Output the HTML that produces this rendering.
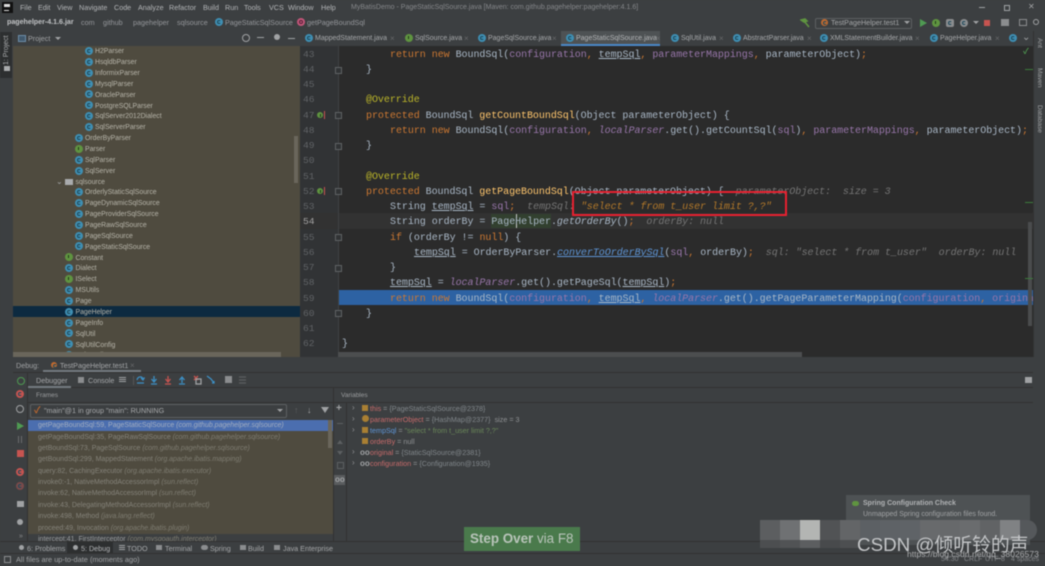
<!DOCTYPE html>
<html><head><meta charset="utf-8"><style>
html,body{margin:0;padding:0;width:1045px;height:566px;overflow:hidden;background:#3c3f41}
#w{position:relative;width:1045px;height:566px;overflow:hidden;font:7px/11px "Liberation Sans","Noto Sans CJK SC",sans-serif;color:#a9abad;filter:blur(.4px)}
#w div,#w svg{position:absolute;white-space:pre}
.m{font-size:7.2px;color:#b3b5b7}
.r{color:#b7b5aa;font-size:6.9px;margin-top:.5px}
.ic{width:8px;height:8px;border-radius:50%;background:#3f8fb3}
.ic:after{content:"";position:absolute;left:2px;top:2px;width:2px;height:2px;border:1px solid #1f4a5c;border-right-color:transparent;border-radius:50%}
.gr{background:#5f9440}.gr:after{left:3px;top:2px;width:1px;height:3px;border:0;background:#22381a;border-radius:0}
.pk{background:#c2567a}.pk:after{border-color:#542036}
.code{font:10px/15px "Liberation Mono",monospace;letter-spacing:-.04px;color:#a9b7c6;transform:translateY(1px)}
.k{color:#cc7832}.f{color:#ffc66d}.an{color:#bbb529}.p{color:#9876aa}.u{text-decoration:underline}.it{font-style:italic}.h{color:#757575;font-style:italic}.l{color:#5e95d6;font-style:italic;text-decoration:underline}
.n{font:9.6px/15px "Liberation Mono",monospace;color:#606366;left:303px}
.t{font-size:7px;color:#a7a9ab;top:33px}
.x{color:#66686a;font-size:8px;top:33px}
.fr{font-size:7px;color:#85837a;left:38px}.fr i{font-style:italic;color:#7f7d72}
.v{font-size:7.2px;left:370px;color:#8f9193}.v .nm{color:#c76a6a}.v .g{color:#80868a}
.vic{width:6px;height:6px;background:#a97f33;left:362px}
.arr{color:#8f9193;left:352px;font-size:8px}
.oo{color:#a0a2a4;left:360px;font-size:8px;font-weight:bold}
.vt{writing-mode:vertical-rl;transform:rotate(180deg);font-size:7px;color:#a9abad;line-height:12px}
.tb{font-size:7.2px;top:543px;color:#a5a7a9}
.st{font-size:7px;color:#85878a;top:548px}
.mos{top:520px;height:20px;width:20px}
.mo2{top:540px;height:8px;width:20px}
.fold{width:5px;height:5px;border:1px solid #5f6264;left:335px;background:#313335}
</style></head><body><div id="w">

<!-- top -->
<div style="left:0;top:0;width:1045px;height:17px;background:#3c3f41"></div>
<div style="left:2px;top:2px;width:11px;height:11px;background:#111"></div>
<div style="left:4px;top:4px;width:6px;height:3px;background:#ddd"></div>
<div style="left:4px;top:10px;width:5px;height:1px;background:#ddd"></div>
<div class="m" style="left:20px;top:2px">File</div><div class="m" style="left:38px;top:2px">Edit</div><div class="m" style="left:57px;top:2px">View</div><div class="m" style="left:79px;top:2px">Navigate</div><div class="m" style="left:114px;top:2px">Code</div><div class="m" style="left:138px;top:2px">Analyze</div><div class="m" style="left:169px;top:2px">Refactor</div><div class="m" style="left:203px;top:2px">Build</div><div class="m" style="left:225px;top:2px">Run</div><div class="m" style="left:244px;top:2px">Tools</div><div class="m" style="left:269px;top:2px">VCS</div><div class="m" style="left:288px;top:2px">Window</div><div class="m" style="left:321px;top:2px">Help</div>
<div style="left:351px;top:2px;font-size:7px;color:#85878a">MyBatisDemo - PageStaticSqlSource.java [Maven: com.github.pagehelper:pagehelper:4.1.6]</div>
<div style="left:979px;top:7px;width:6px;height:1px;background:#a0a2a4"></div>
<div style="left:1004px;top:5px;width:4px;height:4px;border:1px solid #a0a2a4"></div>
<div style="left:1028px;top:1px;font-size:8px;line-height:12px;color:#a0a2a4">✕</div>

<!-- breadcrumb -->
<div style="left:0;top:17px;width:1045px;height:14px;background:#3c3f41;border-bottom:1px solid #323232"></div>
<div style="left:7px;top:17px;font-size:7.1px;color:#c0c2c4;font-weight:bold">pagehelper-4.1.6.jar</div>
<div class="m" style="left:81px;top:17px;color:#94969a">com</div><div class="m" style="left:103px;top:17px;color:#94969a">github</div><div class="m" style="left:133px;top:17px;color:#94969a">pagehelper</div><div class="m" style="left:177px;top:17px;color:#94969a">sqlsource</div>
<div class="ic" style="left:215px;top:18px"></div><div class="m" style="left:225px;top:17px;color:#94969a">PageStaticSqlSource</div>
<div class="ic pk" style="left:297px;top:18px"></div><div class="m" style="left:307px;top:17px;color:#94969a">getPageBoundSql</div>
<svg style="left:800px;top:18px" width="10" height="10" viewBox="0 0 10 10"><path d="M1 2 L5 1 L7 3 L4 4 Z M4 3 L9 9" stroke="#5f9440" stroke-width="1.6" fill="#5f9440"/></svg>
<div style="left:815px;top:18px;width:95px;height:9px;border:1px solid #5c5f61;border-radius:2px"></div>
<div class="ic" style="left:821px;top:19px;background:#c0692f;width:7px;height:7px"></div>
<div class="m" style="left:831px;top:17px;color:#a5a7a9">TestPageHelper.test1</div>
<div style="left:904px;top:21px;border:3px solid transparent;border-top-color:#a0a2a4;width:0;height:0"></div>
<div style="left:920px;top:19px;border:4px solid transparent;border-left:7px solid #4f9a52;border-right:0;width:0;height:0"></div>
<div class="ic gr" style="left:932px;top:19px"></div>
<div class="ic" style="left:946px;top:19px;background:#8b8d8f;border-radius:2px"></div>
<div class="ic" style="left:960px;top:19px;background:#8b8d8f"></div>
<div style="left:973px;top:21px;border:3px solid transparent;border-top-color:#a0a2a4;width:0;height:0"></div>
<div style="left:984px;top:20px;width:6px;height:6px;background:#c75450"></div>
<div style="left:1001px;top:19px;width:8px;height:7px;background:#8b8d8f"></div>
<div style="left:1019px;top:19px;width:8px;height:7px;border:1px solid #8b8d8f;box-sizing:border-box"></div>
<div style="left:1033px;top:19px;width:4px;height:4px;border:1px solid #a0a2a4;border-radius:50%"></div>

<!-- left stripe -->
<div style="left:0;top:31px;width:13px;height:510px;background:#3c3f41;border-right:1px solid #323232"></div>
<div style="left:0;top:32px;width:12px;height:46px;background:#2d2f30"></div>
<div class="vt" style="left:1px;top:35px;height:30px">1: Project</div>
<div style="left:4px;top:66px;width:6px;height:5px;background:#a9abad"></div>
<div class="vt" style="left:1px;top:352px;height:46px">7: Structure</div>
<div class="vt" style="left:1px;top:408px;height:40px">2: Favorites</div>
<div class="vt" style="left:1px;top:460px;height:40px">Persistence</div>
<div class="vt" style="left:1px;top:515px;height:15px">Web</div>

<!-- project header -->
<div style="left:13px;top:31px;width:287px;height:15px;background:#3c3f41;border-bottom:1px solid #323232"></div>
<div style="left:18px;top:35px;width:6px;height:5px;border:1px solid #6c8ca8;background:#41596d"></div>
<div class="m" style="left:28px;top:33px;color:#a0a2a4">Project</div>
<div style="left:55px;top:37px;border:3px solid transparent;border-top-color:#a0a2a4;width:0;height:0"></div>
<div style="left:242px;top:34px;width:6px;height:6px;border:1px solid #a0a2a4;border-radius:50%"></div>
<div style="left:257px;top:37px;width:7px;height:1px;background:#a0a2a4"></div>
<div style="left:274px;top:34px;width:6px;height:6px;background:#a0a2a4;border-radius:50%"></div>
<div style="left:288px;top:38px;width:7px;height:1px;background:#a0a2a4"></div>

<!-- tree -->
<div style="left:13px;top:46px;width:287px;height:311px;background:#4f4b3f"></div>
<div style="left:13px;top:306px;width:287px;height:11px;background:#0d2a40"></div>
<div class="ic" style="left:85px;top:47px"></div><div class="r" style="left:95px;top:45px">H2Parser</div>
<div class="ic" style="left:85px;top:58px"></div><div class="r" style="left:95px;top:56px">HsqldbParser</div>
<div class="ic" style="left:85px;top:69px"></div><div class="r" style="left:95px;top:67px">InformixParser</div>
<div class="ic" style="left:85px;top:80px"></div><div class="r" style="left:95px;top:78px">MysqlParser</div>
<div class="ic" style="left:85px;top:90px"></div><div class="r" style="left:95px;top:89px">OracleParser</div>
<div class="ic" style="left:85px;top:101px"></div><div class="r" style="left:95px;top:100px">PostgreSQLParser</div>
<div class="ic" style="left:85px;top:112px"></div><div class="r" style="left:95px;top:110px">SqlServer2012Dialect</div>
<div class="ic" style="left:85px;top:123px"></div><div class="r" style="left:95px;top:121px">SqlServerParser</div>
<div class="ic" style="left:75px;top:134px"></div><div class="r" style="left:85px;top:132px">OrderByParser</div>
<div class="ic gr" style="left:75px;top:145px"></div><div class="r" style="left:85px;top:143px">Parser</div>
<div class="ic" style="left:75px;top:156px"></div><div class="r" style="left:85px;top:154px">SqlParser</div>
<div class="ic" style="left:75px;top:167px"></div><div class="r" style="left:85px;top:165px">SqlServer</div>
<div style="left:56px;top:176px;color:#a0a2a4;font-size:8px">⌄</div>
<div style="left:65px;top:179px;width:8px;height:6px;background:#a9abad"></div><div class="r" style="left:75.5px;top:176px">sqlsource</div>
<div class="ic" style="left:75px;top:188px"></div><div class="r" style="left:85px;top:186px">OrderlyStaticSqlSource</div>
<div class="ic" style="left:75px;top:199px"></div><div class="r" style="left:85px;top:197px">PageDynamicSqlSource</div>
<div class="ic" style="left:75px;top:210px"></div><div class="r" style="left:85px;top:208px">PageProviderSqlSource</div>
<div class="ic" style="left:75px;top:221px"></div><div class="r" style="left:85px;top:219px">PageRawSqlSource</div>
<div class="ic" style="left:75px;top:232px"></div><div class="r" style="left:85px;top:230px">PageSqlSource</div>
<div class="ic" style="left:75px;top:242px"></div><div class="r" style="left:85px;top:241px">PageStaticSqlSource</div>
<div class="ic gr" style="left:65px;top:253px"></div><div class="r" style="left:75.5px;top:252px">Constant</div>
<div class="ic" style="left:65px;top:264px"></div><div class="r" style="left:75.5px;top:262px">Dialect</div>
<div class="ic gr" style="left:65px;top:275px"></div><div class="r" style="left:75.5px;top:273px">ISelect</div>
<div class="ic" style="left:65px;top:286px"></div><div class="r" style="left:75.5px;top:284px">MSUtils</div>
<div class="ic" style="left:65px;top:297px"></div><div class="r" style="left:75.5px;top:295px">Page</div>
<div class="ic" style="left:65px;top:308px"></div><div class="r" style="left:75.5px;top:306px">PageHelper</div>
<div class="ic" style="left:65px;top:319px"></div><div class="r" style="left:75.5px;top:317px">PageInfo</div>
<div class="ic" style="left:65px;top:329px"></div><div class="r" style="left:75.5px;top:328px">SqlUtil</div>
<div class="ic" style="left:65px;top:340px"></div><div class="r" style="left:75.5px;top:339px">SqlUtilConfig</div>
<div class="ic" style="left:65px;top:351px"></div><div class="r" style="left:75.5px;top:349px">StringUtil</div>
<div style="left:13px;top:352px;width:268px;height:5px;background:#6a665b"></div>
<div style="left:294px;top:136px;width:4px;height:47px;background:#6a665b"></div>

<!-- tabs -->
<div style="left:300px;top:31px;width:733px;height:15px;background:#3c3f41"></div>
<div style="left:561px;top:31px;width:99px;height:13px;background:#4e5254"></div>
<div style="left:561px;top:44px;width:99px;height:2px;background:#4a88c7"></div>
<div class="ic" style="left:305px;top:34px"></div><div class="t" style="left:315px">MappedStatement.java</div><div class="x" style="left:390px">×</div>
<div class="ic gr" style="left:405px;top:34px"></div><div class="t" style="left:415px">SqlSource.java</div><div class="x" style="left:464px">×</div>
<div class="ic" style="left:478px;top:34px"></div><div class="t" style="left:488px">PageSqlSource.java</div><div class="x" style="left:552px">×</div>
<div class="ic" style="left:566px;top:34px"></div><div class="t" style="left:576px;color:#b3b5b7">PageStaticSqlSource.java</div><div class="x" style="left:656px">×</div>
<div class="ic" style="left:671px;top:34px"></div><div class="t" style="left:681px">SqlUtil.java</div><div class="x" style="left:719px">×</div>
<div class="ic" style="left:733px;top:34px"></div><div class="t" style="left:743px">AbstractParser.java</div><div class="x" style="left:807px">×</div>
<div class="ic" style="left:820px;top:34px"></div><div class="t" style="left:830px">XMLStatementBuilder.java</div><div class="x" style="left:915px">×</div>
<div class="ic" style="left:930px;top:34px"></div><div class="t" style="left:940px">PageHelper.java</div><div class="x" style="left:995px">×</div>
<div class="ic" style="left:1009px;top:34px"></div>
<div style="left:1022px;top:31px;color:#a0a2a4;font-size:10px;line-height:13px">⌄</div>

<!-- right stripe -->
<div style="left:1033px;top:31px;width:12px;height:510px;background:#3c3f41;border-left:1px solid #323232"></div>
<div class="vt" style="left:1034px;top:38px;height:18px;transform:none;color:#a0a2a4;font-size:6.5px;line-height:10px">Ant</div>
<div class="vt" style="left:1034px;top:68px;height:26px;transform:none;color:#a0a2a4;font-size:6.5px;line-height:10px">Maven</div>
<div class="vt" style="left:1034px;top:105px;height:36px;transform:none;color:#a0a2a4;font-size:6.5px;line-height:10px">Database</div>

<!-- editor -->
<div style="left:300px;top:46px;width:38px;height:311px;background:#313335"></div>
<div style="left:338px;top:46px;width:695px;height:311px;background:#2b2b2b"></div>
<div style="left:300px;top:213px;width:733px;height:16px;background:#323232"></div>
<div style="left:338px;top:290px;width:695px;height:15px;background:#2d62a3"></div>
<div style="left:491px;top:214px;width:60px;height:14px;background:#32402f"></div>
<div style="left:516px;top:214px;width:1px;height:14px;background:#c8c8c8"></div>

<div class="n" style="top:46.5px">43</div><div class="n" style="top:61.8px">44</div><div class="n" style="top:77px">45</div><div class="n" style="top:92.3px">46</div><div class="n" style="top:107.5px">47</div><div class="n" style="top:122.8px">48</div><div class="n" style="top:138px">49</div><div class="n" style="top:153.3px">50</div><div class="n" style="top:168.5px">51</div><div class="n" style="top:183.8px">52</div><div class="n" style="top:199px">53</div><div class="n" style="top:214.3px;color:#a4a3a3">54</div><div class="n" style="top:229.5px">55</div><div class="n" style="top:244.8px">56</div><div class="n" style="top:260px">57</div><div class="n" style="top:275.3px">58</div><div class="n" style="top:290.5px">59</div><div class="n" style="top:305.8px">60</div><div class="n" style="top:321px">61</div><div class="n" style="top:336.3px">62</div>
<div style="left:338px;top:46px;width:1px;height:311px;background:#3f4244"></div>
<div class="fold" style="top:67px"></div><div class="fold" style="top:112px"></div><div class="fold" style="top:143px"></div><div class="fold" style="top:188px"></div><div class="fold" style="top:234px"></div><div class="fold" style="top:265px"></div><div class="fold" style="top:310px"></div>
<div class="ic gr" style="left:317px;top:112px;width:6px;height:6px"></div><div style="left:324px;top:111px;width:1px;height:8px;background:#c75450"></div>
<div class="ic gr" style="left:317px;top:188px;width:6px;height:6px"></div><div style="left:324px;top:187px;width:1px;height:8px;background:#c75450"></div>

<div class="code" style="left:390px;top:46.5px"><span class="k">return new </span>BoundSql(<span class="p">configuration</span><span class="k">, </span><span class="u">tempSql</span><span class="k">, </span><span class="p">parameterMappings</span><span class="k">, </span>parameterObject)<span class="k">;</span></div>
<div class="code" style="left:366px;top:61.8px">}</div>
<div class="code an" style="left:366px;top:92.3px">@Override</div>
<div class="code" style="left:366px;top:107.5px"><span class="k">protected </span>BoundSql <span class="f">getCountBoundSql</span>(Object parameterObject) {</div>
<div class="code" style="left:390px;top:122.8px"><span class="k">return new </span>BoundSql(<span class="p">configuration</span><span class="k">, </span><span class="p it">localParser</span>.get().getCountSql(<span class="p">sql</span>)<span class="k">, </span><span class="p">parameterMappings</span><span class="k">, </span>parameterObject)<span class="k">;</span></div>
<div class="code" style="left:366px;top:138px">}</div>
<div class="code an" style="left:366px;top:168.5px">@Override</div>
<div class="code" style="left:366px;top:183.8px"><span class="k">protected </span>BoundSql <span class="f">getPageBoundSql</span>(Object parameterObject) {  <span class="h">parameterObject:  size = 3</span></div>
<div class="code" style="left:390px;top:199px">String <span class="u">tempSql</span> = <span class="p">sql</span><span class="k">;</span>  <span class="h">tempSql:</span> <span class="it" style="color:#b3792a">"select * from t_user limit ?,?"</span></div>
<div class="code" style="left:390px;top:214.3px">String orderBy = PageHelper.<span class="it">getOrderBy</span>()<span class="k">;</span>  <span class="h">orderBy: null</span></div>
<div class="code" style="left:390px;top:229.5px"><span class="k">if</span> (orderBy != <span class="k">null</span>) {</div>
<div class="code" style="left:414px;top:244.8px"><span class="u">tempSql</span> = OrderByParser.<span class="l">converToOrderBySql</span>(<span class="p">sql</span><span class="k">, </span>orderBy)<span class="k">;</span>  <span class="h">sql: "select * from t_user"  orderBy: null</span></div>
<div class="code" style="left:390px;top:260px">}</div>
<div class="code" style="left:390px;top:275.3px"><span class="u">tempSql</span> = <span class="p it">localParser</span>.get().getPageSql(<span class="u">tempSql</span>)<span class="k">;</span></div>
<div class="code" style="left:390px;top:290.5px;width:643px;overflow:hidden"><span class="k">return new </span>BoundSql(<span class="p">configuration</span><span class="k">, </span><span class="u">tempSql</span><span class="k">, </span><span class="p it">localParser</span>.get().getPageParameterMapping(<span class="p">configuration</span><span class="k">, </span><span class="p">original</span></div>
<div class="code" style="left:366px;top:305.8px">}</div>
<div class="code" style="left:342px;top:336.3px">}</div>

<div style="left:572px;top:191px;width:211px;height:21px;border:2px solid #e8202f"></div>
<div style="left:1028px;top:222px;width:4px;height:104px;background:#4a4c4d"></div>
<div style="left:1025px;top:69px;width:8px;height:1px;background:#3c7a3c"></div>
<div style="left:1025px;top:202px;width:8px;height:1px;background:#3c7a3c"></div>
<div style="left:1025px;top:278px;width:8px;height:1px;background:#3c7a3c"></div>
<div style="left:1023px;top:47px;color:#4f9a52;font-size:8px;line-height:10px;font-weight:bold">✓</div>
<div style="left:338px;top:352px;width:464px;height:5px;background:#4c4e4f"></div>

<!-- debug panel -->
<div style="left:0;top:357px;width:1045px;height:184px;background:#3c3f41"></div>
<div style="left:13px;top:372px;width:1020px;height:1px;background:#323232"></div>
<div class="m" style="left:16px;top:360px;color:#a0a2a4">Debug:</div>
<div class="ic" style="left:51px;top:362px;background:#c0692f;width:6px;height:6px"></div>
<div class="m" style="left:60px;top:360px;color:#a5a7a9">TestPageHelper.test1</div>
<div class="x" style="left:130px;top:360px">×</div>
<div style="left:43px;top:370px;width:98px;height:2px;background:#747a80"></div>
<div style="left:28px;top:373px;width:1005px;height:14px;background:#3c3f41;border-bottom:1px solid #323232"></div>
<div class="m" style="left:36px;top:375px;color:#a5a7a9">Debugger</div>
<div style="left:28px;top:386px;width:43px;height:2px;background:#747a80"></div>
<div style="left:78px;top:377px;width:6px;height:6px;background:#8b8d8f"></div>
<div class="m" style="left:88px;top:375px;color:#a5a7a9">Console</div>
<div style="left:119px;top:377px;width:7px;height:1px;background:#a0a2a4;box-shadow:0 2px #a0a2a4,0 4px #a0a2a4"></div>
<div style="left:133px;top:376px;width:1px;height:9px;background:#555"></div>
<svg style="left:136px;top:375px" width="112" height="10" viewBox="0 0 112 10" fill="none" stroke-width="1.3">
<path d="M1 5 C2 1 6 1 7 4 M5 3 L7 5 L8.5 2.5 M1 8 H8" stroke="#3d8fc4"/>
<path d="M18 1 V6 M15.5 4 L18 7 L20.5 4 M15 9 H21" stroke="#3d8fc4"/>
<path d="M32 1 V6 M29.5 4 L32 7 L34.5 4 M29 9 H35" stroke="#c75450"/>
<path d="M46 8 V3 M43.5 5 L46 2 L48.5 5 M43 9 H49" stroke="#3d8fc4"/>
<path d="M58 1 L62 5 M62 1 L58 5" stroke="#c75450"/><rect x="60" y="4" width="5" height="5" stroke="#a0a2a4"/>
<path d="M71 1 L75 4 L78 8 M76 8 H78 V6" stroke="#3d8fc4"/>
<rect x="89" y="1" width="7" height="7" fill="#8b8d8f" stroke="none"/>
<path d="M103 2 H110 M103 5 H110 M103 8 H110" stroke="#5c5f61"/>
</svg>
<div style="left:1025px;top:377px;width:7px;height:6px;background:#a0a2a4"></div>

<div style="left:28px;top:402px;width:1005px;height:1px;background:#323232"></div>
<div style="left:36px;top:390px;font-size:6.5px;color:#9a9c9e">Frames</div>
<div style="left:341px;top:390px;font-size:6.5px;color:#9a9c9e">Variables</div>
<div style="left:333px;top:388px;width:1px;height:153px;background:#323232"></div>
<div style="left:346px;top:403px;width:1px;height:138px;background:#323232"></div>

<div style="left:30px;top:404px;width:255px;height:12px;border:1px solid #5c5f61;border-radius:2px;background:#3c3f41"></div>
<div style="left:34px;top:405px;color:#c0692f;font-size:9px;font-weight:bold">✓</div>
<div style="left:44px;top:405px;font-size:7.2px;color:#a5a7a9">"main"@1 in group "main": RUNNING</div>
<div style="left:277px;top:409px;border:3px solid transparent;border-top-color:#a0a2a4;width:0;height:0"></div>
<div style="left:294px;top:405px;color:#5c5f61;font-size:9px">↑</div>
<div style="left:307px;top:405px;color:#a0a2a4;font-size:9px">↓</div>
<div style="left:321px;top:407px;border:4px solid transparent;border-top:6px solid #a0a2a4;width:0;height:0"></div>

<div style="left:28px;top:420px;width:305px;height:114px;background:#4f4b3f"></div>
<div style="left:28px;top:420px;width:305px;height:11px;background:#4b6eaf"></div>
<div style="left:328px;top:420px;width:4px;height:28px;background:#6a665b"></div>
<div class="fr" style="top:420px;color:#a3aec0">getPageBoundSql:59, PageStaticSqlSource <i style="color:#a3aec0">(com.github.pagehelper.sqlsource)</i></div>
<div class="fr" style="top:431.5px">getPageBoundSql:35, PageRawSqlSource <i>(com.github.pagehelper.sqlsource)</i></div>
<div class="fr" style="top:443px">getBoundSql:73, PageSqlSource <i>(com.github.pagehelper.sqlsource)</i></div>
<div class="fr" style="top:454px">getBoundSql:299, MappedStatement <i>(org.apache.ibatis.mapping)</i></div>
<div class="fr" style="top:465.5px">query:82, CachingExecutor <i>(org.apache.ibatis.executor)</i></div>
<div class="fr" style="top:477px">invoke0:-1, NativeMethodAccessorImpl <i>(sun.reflect)</i></div>
<div class="fr" style="top:488px">invoke:62, NativeMethodAccessorImpl <i>(sun.reflect)</i></div>
<div class="fr" style="top:499.5px">invoke:43, DelegatingMethodAccessorImpl <i>(sun.reflect)</i></div>
<div class="fr" style="top:511px">invoke:498, Method <i>(java.lang.reflect)</i></div>
<div class="fr" style="top:522.5px">proceed:49, Invocation <i>(org.apache.ibatis.plugin)</i></div>
<div class="fr" style="top:534px;height:7px;overflow:hidden;color:#9a9c9e">intercept:41, FirstInterceptor <i>(com.mysqoauth.interceptor)</i></div>

<!-- debug left toolbar -->
<div style="left:27px;top:373px;width:1px;height:168px;background:#323232"></div>
<div style="left:17px;top:377px;width:6px;height:6px;border:1px solid #4f9a52;border-radius:50%"></div>
<div class="ic" style="left:16px;top:390px;background:#c75450"></div>
<div style="left:16px;top:405px;width:6px;height:6px;border:1px solid #a0a2a4;border-radius:50%"></div>
<div style="left:17px;top:422px;border:4px solid transparent;border-left:7px solid #4f9a52;border-right:0;width:0;height:0"></div>
<div style="left:18px;top:436px;width:1px;height:7px;background:#6a6c6e;box-shadow:3px 0 #6a6c6e"></div>
<div style="left:17px;top:450px;width:7px;height:7px;background:#c75450"></div>
<div class="ic" style="left:16px;top:468px;background:#c75450"></div>
<div class="ic" style="left:16px;top:482px;background:#7a4a4a"></div>
<div style="left:17px;top:501px;width:7px;height:6px;background:#a0a2a4"></div>
<div style="left:17px;top:519px;width:6px;height:6px;background:#a0a2a4;border-radius:50%"></div>
<div style="left:19px;top:531px;color:#8b8d8f;font-size:7px">»</div>
<!-- second toolbar -->
<div style="left:336px;top:403px;color:#a0a2a4;font-size:10px;font-weight:bold">+</div>
<div style="left:337px;top:423px;width:6px;height:1px;background:#5c5f61"></div>
<div style="left:337px;top:437px;border:3px solid transparent;border-bottom:4px solid #5c5f61;width:0;height:0"></div>
<div style="left:337px;top:451px;border:3px solid transparent;border-top:4px solid #5c5f61;width:0;height:0"></div>
<div style="left:337px;top:462px;width:5px;height:5px;border:1px solid #5c5f61"></div>
<div style="left:334px;top:475px;width:11px;height:10px;background:#5a5d5f"></div>
<div style="left:335px;top:474px;font-size:8px;font-weight:bold;color:#a0a2a4">oo</div>

<!-- variables -->
<div class="arr" style="top:402px">›</div><div class="vic" style="top:405px"></div>
<div class="v" style="top:403px"><span class="nm">this</span> = <span class="g">{PageStaticSqlSource@2378}</span></div>
<div class="arr" style="top:413px">›</div><div class="vic" style="top:415px;border-radius:50%;width:7px;height:7px"></div>
<div class="v" style="top:414px"><span class="nm">parameterObject</span> = <span class="g">{HashMap@2377}</span>  size = 3</div>
<div class="arr" style="top:424px">›</div><div class="vic" style="top:427px"></div>
<div class="v" style="top:425px"><span style="color:#5e95d6">tempSql</span> = <span style="color:#6a8759">"select * from t_user limit ?,?"</span></div>
<div class="vic" style="top:438px"></div>
<div class="v" style="top:436px"><span class="nm">orderBy</span> = null</div>
<div class="arr" style="top:446px">›</div><div class="oo" style="top:447px">oo</div>
<div class="v" style="top:447px"><span class="nm">original</span> = <span class="g">{StaticSqlSource@2381}</span></div>
<div class="arr" style="top:457px">›</div><div class="oo" style="top:458px">oo</div>
<div class="v" style="top:458px"><span class="nm">configuration</span> = <span class="g">{Configuration@1935}</span></div>

<!-- bottom bars -->
<div style="left:0;top:541px;width:1045px;height:12px;background:#3c3f41;border-top:1px solid #323232"></div>
<div style="left:67px;top:542px;width:46px;height:11px;background:#2d2f30"></div>
<div style="left:19px;top:545px;width:5px;height:5px;background:#a0a2a4;border-radius:50%"></div><div class="tb" style="left:27px">6: Problems</div>
<div style="left:73px;top:545px;width:5px;height:5px;background:#a0a2a4;border-radius:50%"></div><div class="tb" style="left:81px;color:#b3b5b7">5: Debug</div>
<div style="left:119px;top:545px;width:6px;height:1px;background:#a0a2a4;box-shadow:0 2px #a0a2a4,0 4px #a0a2a4"></div><div class="tb" style="left:127px">TODO</div>
<div style="left:156px;top:545px;width:6px;height:5px;background:#8b8d8f"></div><div class="tb" style="left:165px">Terminal</div>
<div style="left:201px;top:545px;width:7px;height:5px;background:#8b8d8f;border-radius:3px"></div><div class="tb" style="left:210px">Spring</div>
<div style="left:240px;top:545px;width:6px;height:5px;background:#8b8d8f"></div><div class="tb" style="left:248px">Build</div>
<div style="left:274px;top:545px;width:6px;height:5px;background:#8b8d8f"></div><div class="tb" style="left:283px">Java Enterprise</div>
<div style="left:0;top:553px;width:1045px;height:13px;background:#3c3f41;border-top:1px solid #323232"></div>
<div style="left:4px;top:556px;width:5px;height:5px;border:1px solid #8b8d8f"></div>
<div style="left:16px;top:554px;font-size:7.4px;color:#a0a2a4">All files are up-to-date (moments ago)</div>

<!-- step over -->
<div style="left:464px;top:527px;width:116px;height:24px;background:#4a7a4c"></div>
<div style="left:470px;top:530px;font-size:13.4px;line-height:18px;color:#b9c4ba"><b>Step Over</b> via F8</div>

<!-- notification -->
<div style="left:846px;top:495px;width:184px;height:50px;background:#4e5254"></div>
<div style="left:852px;top:501px;width:7px;height:5px;background:#5f9440;border-radius:3px"></div>
<div style="left:863px;top:498px;font-size:7px;font-weight:bold;color:#b0b2b4">Spring Configuration Check</div>
<div style="left:863px;top:509px;font-size:7px;color:#a0a2a4">Unmapped Spring configuration files found.</div>

<!-- mosaic -->
<div class="mos" style="left:760px;background:#5c5e60"></div><div class="mos" style="left:780px;background:#6f7173"></div><div class="mos" style="left:800px;background:#b3b5b3"></div><div class="mos" style="left:820px;background:#515355"></div><div class="mos" style="left:840px;background:#636567"></div><div class="mos" style="left:860px;background:#5c6064"></div><div class="mos" style="left:880px;background:#5e6266"></div><div class="mos" style="left:900px;background:#5f6367"></div><div class="mos" style="left:920px;background:#686a6c"></div><div class="mos" style="left:940px;background:#67696b"></div><div class="mos" style="left:960px;background:#6a6c6e"></div><div class="mos" style="left:980px;background:#616365"></div><div class="mos" style="left:1000px;background:#808284"></div><div class="mos" style="left:1020px;width:17px;background:#55585b;border-radius:0 12px 12px 0"></div>
<div class="mo2" style="left:760px;background:#4c4e50"></div><div class="mo2" style="left:780px;background:#515355"></div><div class="mo2" style="left:800px;background:#5c5e60"></div><div class="mo2" style="left:820px;background:#484a4c"></div><div class="mo2" style="left:840px;background:#4d4f51"></div>

<!-- status right -->
<div class="st" style="left:941px;top:554px">54:30</div><div class="st" style="left:964px;top:554px">CRLF</div><div class="st" style="left:985px;top:554px">UTF-8</div><div class="st" style="left:1011px;top:554px">4 spaces</div>
<!-- watermark -->
<div style="left:857px;top:534px;font-size:18.8px;line-height:22px;color:#c4c6c8;font-family:'Liberation Sans','Noto Sans CJK SC',sans-serif">CSDN @倾听铃的声</div>
<div style="left:907px;top:549px;font-size:8.6px;color:#a9abad">https://blog.csdn.net/qq_38026573</div>
</div></body></html>
